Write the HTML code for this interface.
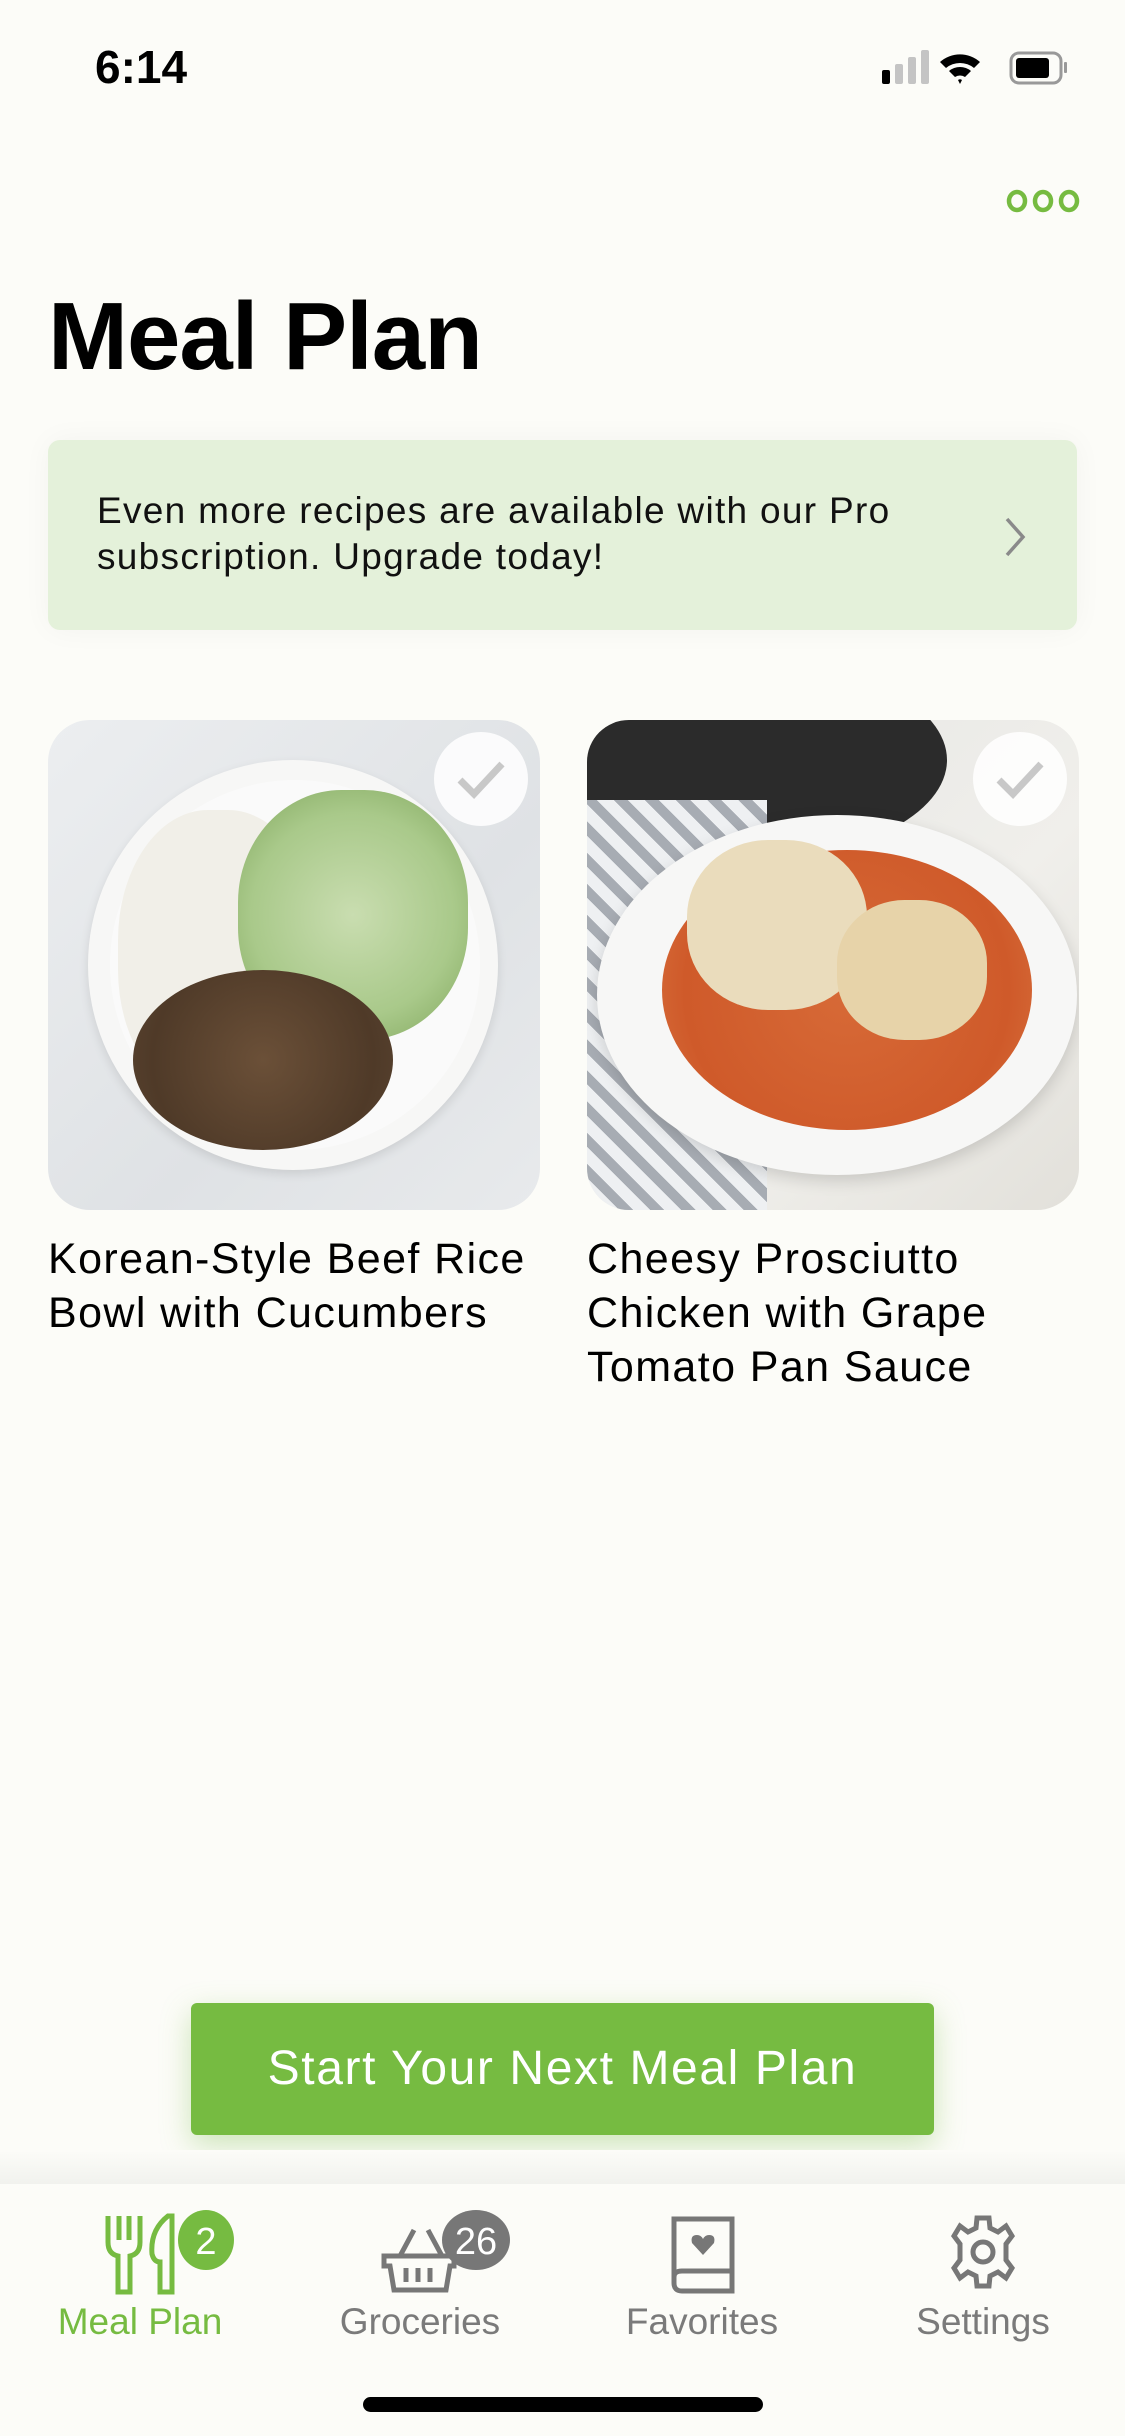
<!DOCTYPE html>
<html><head><meta charset="utf-8"><style>
*{margin:0;padding:0;box-sizing:border-box}
body{width:1125px;height:2436px;background:#fcfcf8;font-family:"Liberation Sans",sans-serif;position:relative;overflow:hidden;color:#000}
.a{position:absolute}
.card{position:absolute;top:720px;width:492px;height:490px;border-radius:42px;overflow:hidden}
.chk{position:absolute;top:12px;right:12px;width:94px;height:94px;border-radius:50%;background:rgba(255,255,255,.85)}
.t{position:absolute;top:1232px;font-size:43px;line-height:54px;width:560px;letter-spacing:1.4px}
.tab{position:absolute;top:2301px;font-size:37px;color:#7a7a7a;width:260px;text-align:center}
</style></head><body>
<div class="a" style="left:95px;top:40px;font-size:46px;font-weight:bold">6:14</div>
<svg class="a" style="left:880px;top:50px" width="200" height="40">
<rect x="2" y="20" width="8" height="14" rx="2" fill="#000"/>
<rect x="15" y="14" width="8" height="20" rx="2" fill="#c4c4c4"/>
<rect x="28" y="7" width="8" height="27" rx="2" fill="#c4c4c4"/>
<rect x="41" y="0" width="8" height="34" rx="2" fill="#c4c4c4"/>
<path d="M60 12 A30 30 0 0 1 100 12 L94 18 A22 22 0 0 0 66 18Z M69 21 A17 17 0 0 1 91 21 L85 27 A9 9 0 0 0 75 27Z M78 30 L80 34 L82 30 A3 3 0 0 0 78 30Z" fill="#000"/>
<rect x="131" y="3" width="50" height="30" rx="8" fill="none" stroke="#999" stroke-width="3"/>
<rect x="136" y="8" width="33" height="20" rx="3" fill="#000"/>
<rect x="184" y="12" width="3" height="11" rx="1" fill="#999"/>
</svg>
<svg class="a" style="left:1005px;top:188px" width="76" height="26"><g fill="none" stroke="#76bb41" stroke-width="4.5"><ellipse cx="12" cy="13" rx="8" ry="9"/><ellipse cx="38" cy="13" rx="8" ry="9"/><ellipse cx="64" cy="13" rx="8" ry="9"/></g></svg>
<div class="a" style="left:48px;top:282px;font-size:96px;font-weight:bold;letter-spacing:-1px">Meal Plan</div>
<div class="a" style="left:48px;top:440px;width:1029px;height:190px;background:#e4f1da;border-radius:12px;box-shadow:0 0 30px rgba(0,0,0,.04)"></div>
<div class="a" style="left:97px;top:488px;font-size:37px;line-height:46px;color:#111;letter-spacing:1.3px">Even more recipes are available with our Pro<br>subscription. Upgrade today!</div>
<svg class="a" style="left:1003px;top:515px" width="24" height="44"><path d="M4 4 L20 22 L4 40" fill="none" stroke="#8a8a8a" stroke-width="3.5"/></svg>

<div class="card" style="left:48px;background:linear-gradient(135deg,#eceef0,#dfe2e5 60%,#e8eaec)">
<div class="a" style="left:40px;top:40px;width:410px;height:410px;border-radius:50%;background:#f7f7f6;box-shadow:0 4px 10px rgba(0,0,0,.1)"></div>
<div class="a" style="left:62px;top:60px;width:370px;height:370px;border-radius:50%;background:#fafafa"></div>
<div class="a" style="left:70px;top:90px;width:200px;height:290px;border-radius:45%;background:#f1efe8"></div>
<div class="a" style="left:190px;top:70px;width:230px;height:250px;border-radius:45%;background:radial-gradient(circle,#c9ddb0 0,#a9c98a 60%,#7ea55a 100%)"></div>
<div class="a" style="left:85px;top:250px;width:260px;height:180px;border-radius:50%;background:radial-gradient(circle,#6b5038 0,#4f3a28 70%,#5a4431 100%)"></div>
<div class="chk"><svg width="94" height="94"><path d="M26 48 L40 62 L68 32" fill="none" stroke="#c8c8c8" stroke-width="7"/></svg></div>
</div>
<div class="card" style="left:587px;background:linear-gradient(135deg,#e5e5e3,#f0efeb 60%,#e2e0da)">
<div class="a" style="left:-40px;top:-60px;width:400px;height:200px;border-radius:50%;background:#2b2b2b"></div>
<div class="a" style="left:-20px;top:80px;width:200px;height:420px;background:repeating-linear-gradient(45deg,#a7acb3 0 10px,#eef0f2 10px 22px)"></div>
<div class="a" style="left:10px;top:95px;width:480px;height:360px;border-radius:50%;background:#f7f7f6;box-shadow:0 6px 16px rgba(0,0,0,.15)"></div>
<div class="a" style="left:75px;top:130px;width:370px;height:280px;border-radius:50%;background:radial-gradient(circle,#d76a37 0,#cf5a2a 70%,#d97440 100%)"></div>
<div class="a" style="left:100px;top:120px;width:180px;height:170px;border-radius:45%;background:#eadcbc"></div>
<div class="a" style="left:250px;top:180px;width:150px;height:140px;border-radius:45%;background:#e7d3a9"></div>
<div class="chk"><svg width="94" height="94"><path d="M26 48 L40 62 L68 32" fill="none" stroke="#c8c8c8" stroke-width="7"/></svg></div>
</div>
<div class="t" style="left:48px">Korean-Style Beef Rice<br>Bowl with Cucumbers</div>
<div class="t" style="left:587px">Cheesy Prosciutto<br>Chicken with Grape<br>Tomato Pan Sauce</div>

<div class="a" style="left:191px;top:2003px;width:743px;height:132px;background:#76bb41;border-radius:6px;box-shadow:0 10px 30px rgba(118,187,65,.35);color:#fff;font-size:48px;text-align:center;line-height:132px;letter-spacing:1.6px">Start Your Next Meal Plan</div>
<div class="a" style="left:0;top:2150px;width:1125px;height:34px;background:linear-gradient(#fcfcf8,#f1f2ee)"></div>
<div class="a" style="left:0;top:2184px;width:1125px;height:252px;background:#fcfcf8"></div>

<svg class="a" style="left:100px;top:2210px" width="140" height="85">
<g fill="none" stroke="#76bb41" stroke-width="5">
<path d="M8 6 V32 Q8 44 18 46 V82 H30 V46 Q40 44 40 32 V6 M19 6 V30 M29 6 V30"/>
<path d="M68 6 Q50 20 52 44 Q54 52 60 52 V82 H72 V6Z"/>
</g>
<ellipse cx="106" cy="30" rx="28" ry="30" fill="#76bb41"/>
<text x="106" y="44" text-anchor="middle" font-size="38" fill="#fff" font-family="Liberation Sans">2</text>
</svg>
<svg class="a" style="left:378px;top:2210px" width="150" height="85">
<g fill="none" stroke="#777" stroke-width="5"><path d="M36 20 L22 46 M50 20 L64 46"/><path d="M6 46 H76 V56 H72 L68 80 H16 L12 56 H6Z"/><path d="M28 58 V72 M40 58 V72 M52 58 V72"/></g>
<ellipse cx="98" cy="30" rx="34" ry="30" fill="#777"/>
<text x="98" y="44" text-anchor="middle" font-size="38" fill="#fff" font-family="Liberation Sans">26</text>
</svg>
<svg class="a" style="left:668px;top:2215px" width="70" height="80"><g fill="none" stroke="#777" stroke-width="5"><path d="M6 4 H64 V76 H14 Q6 76 6 68Z M6 62 Q6 56 14 56 H64"/></g><path d="M35 40 L24 28 Q22 20 29 20 Q33 20 35 24 Q37 20 41 20 Q48 20 46 28Z" fill="#777"/></svg>
<svg class="a" style="left:948px;top:2214px" width="70" height="76"><g fill="none" stroke="#777" stroke-width="5"><path d="M29 4 H41 L42 14 L50 18 L58 12 L64 22 L58 30 V46 L64 54 L58 64 L50 58 L42 62 L41 72 H29 L28 62 L20 58 L12 64 L6 54 L12 46 V30 L6 22 L12 12 L20 18 L28 14Z"/><circle cx="35" cy="38" r="10"/></g></svg>
<div class="tab" style="left:10px;color:#76bb41">Meal Plan</div>
<div class="tab" style="left:290px">Groceries</div>
<div class="tab" style="left:572px">Favorites</div>
<div class="tab" style="left:853px">Settings</div>
<div class="a" style="left:363px;top:2397px;width:400px;height:15px;border-radius:8px;background:#000"></div>
</body></html>
